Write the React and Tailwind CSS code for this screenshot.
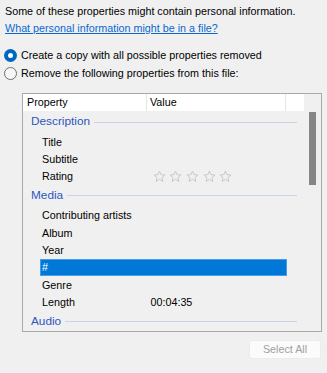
import React from "react";

const GROUPS = [
  {
    name: "Description",
    rows: [
      { label: "Title" },
      { label: "Subtitle" },
      { label: "Rating", stars: true },
    ],
  },
  {
    name: "Media",
    rows: [
      { label: "Contributing artists" },
      { label: "Album" },
      { label: "Year" },
      { label: "#", selected: true },
      { label: "Genre" },
      { label: "Length", value: "00:04:35" },
    ],
  },
  { name: "Audio", rows: [] },
];

function Star() {
  return (
    <svg width="13" height="13" viewBox="0 0 24 24" className="shrink-0">
      <polygon
        points="12,2 14.9,8.6 22,9.3 16.6,14 18.2,21 12,17.3 5.8,21 7.4,14 2,9.3 9.1,8.6"
        fill="none"
        stroke="#c2c2c2"
        strokeWidth="1.6"
        strokeLinejoin="round"
      />
    </svg>
  );
}

function Radio({ checked, label }) {
  return (
    <div className="h-[18px] flex items-center gap-[4px] ml-[-1px]">
      {checked ? (
        <span className="w-[13px] h-[13px] rounded-full bg-[#0067c0] flex items-center justify-center">
          <span className="w-[5px] h-[5px] rounded-full bg-white" />
        </span>
      ) : (
        <span className="w-[13px] h-[13px] rounded-full border border-[#6f6f6f] bg-[#f7f7f7]" />
      )}
      <span>{label}</span>
    </div>
  );
}

function Row({ row }) {
  return (
    <div
      className={`ml-[17px] w-[247px] h-[17.3px] shrink-0 flex items-center ${
        row.selected ? "bg-[#0078d7] border border-[#4c9be4] text-white" : ""
      }`}
    >
      <div className={`w-[107px] ${row.selected ? "pl-[1px]" : "pl-[2px]"}`}>{row.label}</div>
      {row.stars && (
        <div className="flex gap-[3.7px] pl-[5.5px]">
          <Star />
          <Star />
          <Star />
          <Star />
          <Star />
        </div>
      )}
      {row.value && <div className="pl-[3.5px]">{row.value}</div>}
    </div>
  );
}

export default function App() {
  return (
    <div className="w-[327px] h-[373px] bg-[#f0f0f0] pt-[3px] pl-[5px] text-[10.75px] text-black font-['Liberation_Sans',Arial,sans-serif] overflow-hidden">
      <p className="h-[17px] leading-[17px]">
        Some of these properties might contain personal information.
      </p>
      <p className="h-[17px] leading-[17px]">
        <a className="text-[#0b68cf] underline">What personal information might be in a file?</a>
      </p>

      <div className="mt-[9px] flex flex-col">
        <Radio checked label="Create a copy with all possible properties removed" />
        <Radio label="Remove the following properties from this file:" />
      </div>

      <div className="mt-[11px] ml-[17px] w-[300px] h-[239px] border border-[#a9a9a9] flex overflow-hidden">
        <div className="w-[281px] flex flex-col">
          <div className="h-[17px] shrink-0 bg-white flex items-center">
            <div className="w-[124px] h-full pl-[4px] flex items-center border-r border-[#e5e5e5]">
              Property
            </div>
            <div className="w-[139px] h-full pl-[3px] flex items-center border-r border-[#e5e5e5]">
              Value
            </div>
            <div className="flex-1" />
          </div>
          <div className="flex flex-col overflow-hidden">
            {GROUPS.map((g) => (
              <React.Fragment key={g.name}>
                <div className="h-[22px] shrink-0 pl-[8px] pr-[7px] flex items-center gap-[4px]">
                  <span className="text-[11.8px] text-[#2d56bf]">{g.name}</span>
                  <span className="flex-1 h-px bg-[#c9d4ec]" />
                </div>
                {g.rows.map((r) => (
                  <Row key={r.label} row={r} />
                ))}
              </React.Fragment>
            ))}
          </div>
        </div>
        <div className="w-[17px] bg-[#f0f0f0]">
          <div className="mt-[18px] ml-[5px] w-[7px] h-[73px] bg-[#868686]" />
        </div>
      </div>

      <div className="mt-[8px] flex justify-end pr-[6px]">
        <button className="w-[72px] h-[19px] rounded-[3px] bg-[#fbfbfb] border border-[#ececec] text-[#a0a0a0] text-[10.75px]">
          Select All
        </button>
      </div>
    </div>
  );
}
